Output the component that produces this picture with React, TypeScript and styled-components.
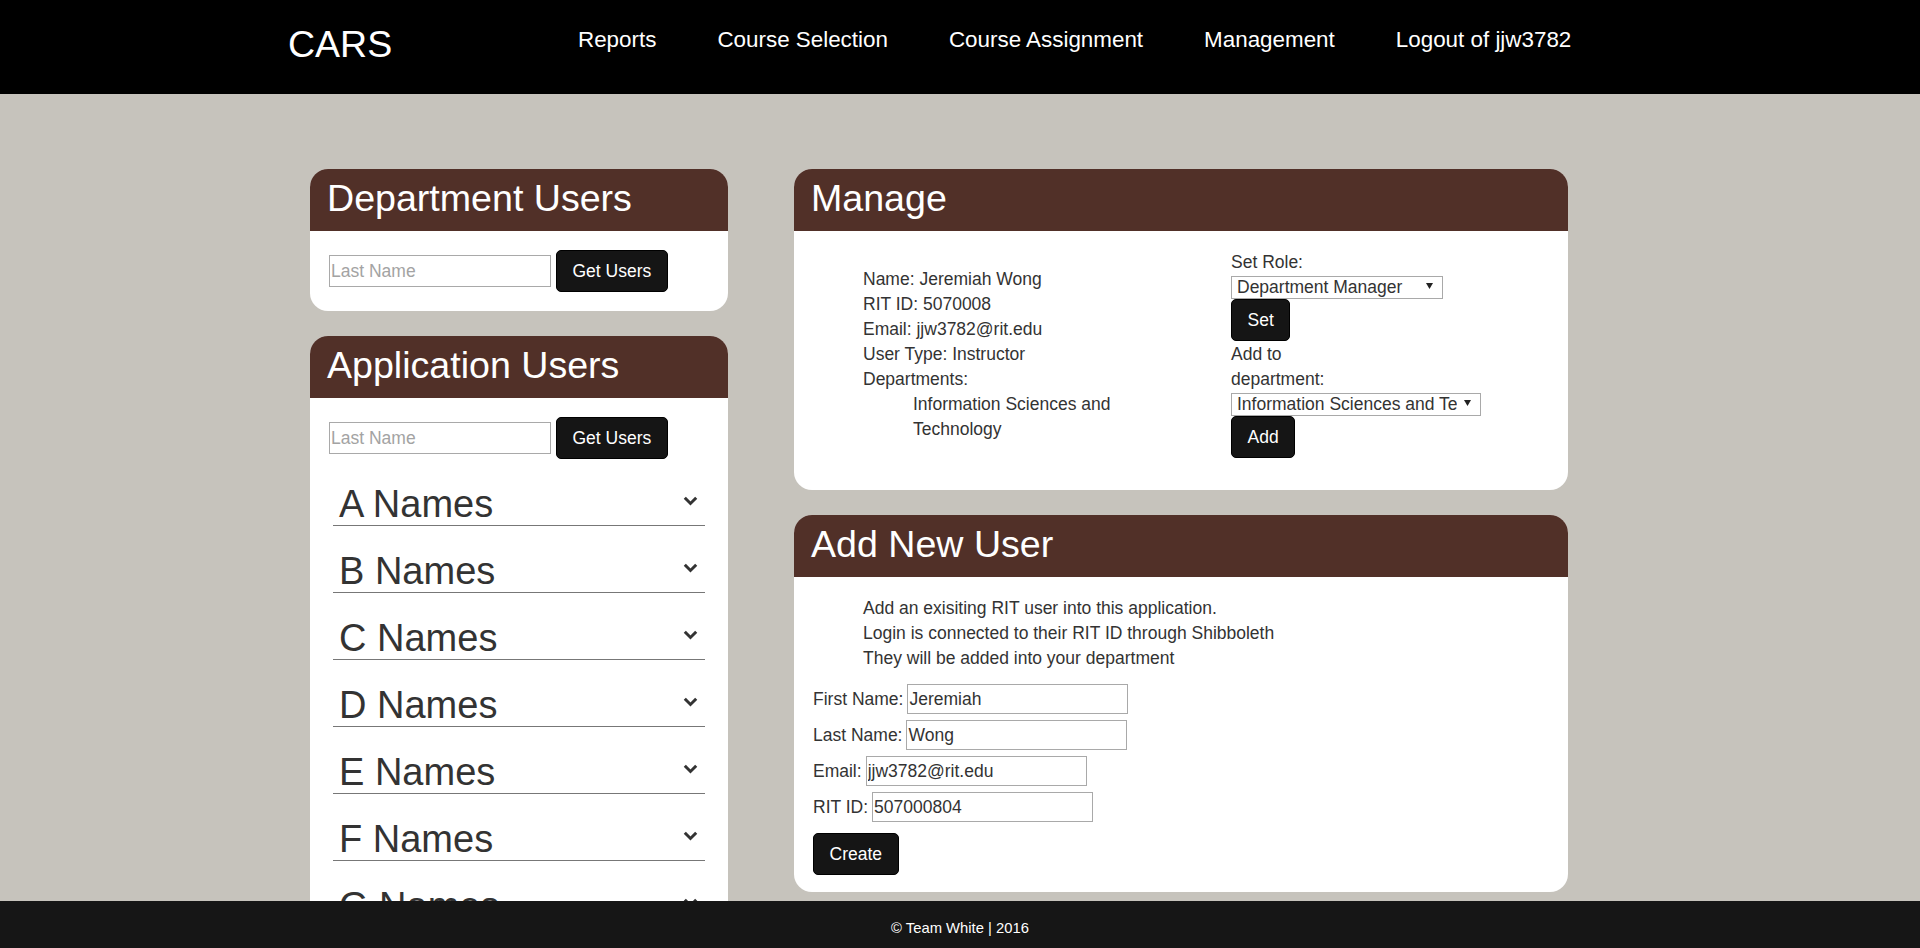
import React from "react";
import styled, { createGlobalStyle } from "styled-components";

const FONT = `"Liberation Sans", Arial, sans-serif`;
const LETTERS = "ABCDEFGHIJKLMNOPQRSTUVWXYZ".split("");
const NAV = ["Reports", "Course Selection", "Course Assignment", "Management", "Logout of jjw3782"];

const GlobalStyle = createGlobalStyle`
  body {
    margin: 0;
    background: #c6c3bc;
    font-family: ${FONT};
    color: #333;
  }
`;

const Chevron = () => (
  <ChevronIcon width="15" height="10" viewBox="0 0 15 10">
    <polyline points="1.8,1.8 7.5,7.5 13.2,1.8" fill="none" stroke="#333" strokeWidth="3" />
  </ChevronIcon>
);

const Caret = () => (
  <CaretIcon width="7" height="6" viewBox="0 0 7 6">
    <polygon points="0,0 7,0 3.5,6" fill="#222" />
  </CaretIcon>
);

const App = (): JSX.Element => (
  <>
    <GlobalStyle />
    <TopBar>
      <Brand>CARS</Brand>
      <Nav>
        {NAV.map((item) => (
          <NavLink key={item} href="#">
            {item}
          </NavLink>
        ))}
      </Nav>
    </TopBar>

    <Main>
      <Column $width={418}>
        <Panel>
          <PanelHeader>Department Users</PanelHeader>
          <PanelBody>
            <SearchRow>
              <TextInput placeholder="Last Name" />
              <Button>Get Users</Button>
            </SearchRow>
          </PanelBody>
        </Panel>

        <Panel>
          <PanelHeader>Application Users</PanelHeader>
          <PanelBody $pad="19px 19px 20px">
            <SearchRow>
              <TextInput placeholder="Last Name" />
              <Button>Get Users</Button>
            </SearchRow>
            <NameList>
              {LETTERS.map((l) => (
                <NameItem key={l}>
                  <NameLabel>{l} Names</NameLabel>
                  <Chevron />
                </NameItem>
              ))}
            </NameList>
          </PanelBody>
        </Panel>
      </Column>

      <Column $width={774}>
        <Panel>
          <PanelHeader>Manage</PanelHeader>
          <ManageBody>
            <InfoCol>
              <div>Name: Jeremiah Wong</div>
              <div>RIT ID: 5070008</div>
              <div>Email: jjw3782@rit.edu</div>
              <div>User Type: Instructor</div>
              <div>Departments:</div>
              <DeptName>Information Sciences and Technology</DeptName>
            </InfoCol>
            <ActionCol>
              <FieldLabel>Set Role:</FieldLabel>
              <SelectWrap $width={212}>
                <Select defaultValue="manager">
                  <option value="instructor">Instructor</option>
                  <option value="manager">Department Manager</option>
                  <option value="admin">Administrator</option>
                </Select>
                <Caret />
              </SelectWrap>
              <Button $gapBelow>Set</Button>
              <FieldLabel>Add to department:</FieldLabel>
              <SelectWrap $width={250}>
                <Select defaultValue="ist">
                  <option value="ist">Information Sciences and Technology</option>
                  <option value="cs">Computer Science</option>
                </Select>
                <Caret />
              </SelectWrap>
              <Button>Add</Button>
            </ActionCol>
          </ManageBody>
        </Panel>

        <Panel>
          <PanelHeader>Add New User</PanelHeader>
          <PanelBody $pad="19px 19px 17px">
            <Intro>
              <div>Add an exisiting RIT user into this application.</div>
              <div>Login is connected to their RIT ID through Shibboleth</div>
              <div>They will be added into your department</div>
            </Intro>
            <FormRow>
              <span>First Name:</span>
              <TextInput $h={30} $w={221} defaultValue="Jeremiah" />
            </FormRow>
            <FormRow>
              <span>Last Name:</span>
              <TextInput $h={30} $w={221} defaultValue="Wong" />
            </FormRow>
            <FormRow>
              <span>Email:</span>
              <TextInput $h={30} $w={221} defaultValue="jjw3782@rit.edu" />
            </FormRow>
            <FormRow>
              <span>RIT ID:</span>
              <TextInput $h={30} $w={221} defaultValue="507000804" />
            </FormRow>
            <Button $gapAbove>Create</Button>
          </PanelBody>
        </Panel>
      </Column>
    </Main>

    <Footer>© Team White | 2016</Footer>
  </>
);

const TopBar = styled.header`
  background: #000;
  height: 94px;
  box-sizing: border-box;
  display: flex;
  align-items: flex-start;
  padding-left: 288px;
`;

const Brand = styled.div`
  width: 290px;
  padding-top: 26px;
  font-size: 37.5px;
  line-height: 1;
  color: #fff;
`;

const Nav = styled.nav`
  display: flex;
  gap: 61px;
  padding-top: 29px;
`;

const NavLink = styled.a`
  color: #fff;
  font-size: 22.4px;
  line-height: 1;
  text-decoration: none;
`;

const Main = styled.main`
  display: flex;
  align-items: flex-start;
  gap: 66px;
  padding: 75px 0 80px 310px;
`;

const Column = styled.div<{ $width: number }>`
  width: ${(p) => p.$width}px;
  flex-shrink: 0;
  display: flex;
  flex-direction: column;
  gap: 25px;
`;

const Panel = styled.section`
  background: #fff;
  border-radius: 18px;
  overflow: hidden;
`;

const PanelHeader = styled.h2`
  margin: 0;
  height: 62px;
  box-sizing: border-box;
  padding: 11px 0 0 17px;
  background: #513028;
  color: #fff;
  font-size: 37.6px;
  font-weight: normal;
  line-height: 1;
`;

const PanelBody = styled.div<{ $pad?: string }>`
  padding: ${(p) => p.$pad ?? "19px"};
  font-size: 17.5px;
`;

const SearchRow = styled.div`
  display: flex;
  align-items: center;
  gap: 5px;
`;

const TextInput = styled.input<{ $w?: number; $h?: number }>`
  width: ${(p) => p.$w ?? 222}px;
  height: ${(p) => p.$h ?? 32}px;
  box-sizing: border-box;
  margin: 0;
  padding: 0 1px;
  border: 1px solid #a9a9a9;
  border-radius: 0;
  font: 17.5px ${FONT};
  color: #333;
  outline: none;

  &::placeholder {
    color: #a3a3a3;
  }
`;

const Button = styled.button<{ $gapAbove?: boolean; $gapBelow?: boolean }>`
  height: 42px;
  margin: ${(p) => (p.$gapAbove ? "5px" : "0")} 0 ${(p) => (p.$gapBelow ? "1px" : "0")};
  padding: 0 15.5px;
  background: #151515;
  color: #fff;
  border: 1px solid #000;
  border-radius: 5px;
  font: 17.5px ${FONT};
  cursor: pointer;
`;

const NameList = styled.ul`
  list-style: none;
  margin: 0 4px;
  padding: 0;
`;

const NameItem = styled.li`
  height: 66px;
  display: flex;
  align-items: flex-end;
  justify-content: space-between;
  padding: 0 7px 0 6px;
  border-bottom: 1px solid #777;
  color: #333;
`;

const NameLabel = styled.span`
  font-size: 38px;
  line-height: 1;
  margin-bottom: 2px;
`;

const ChevronIcon = styled.svg`
  margin-bottom: 19px;
`;

const ManageBody = styled.div`
  display: flex;
  align-items: center;
  padding: 19px 19px 32px 69px;
  font-size: 17.5px;
  line-height: 25px;
`;

const InfoCol = styled.div`
  width: 368px;
  flex-shrink: 0;
`;

const DeptName = styled.div`
  margin-left: 50px;
  width: 215px;
`;

const ActionCol = styled.div`
  width: 110px;
  display: flex;
  flex-direction: column;
  align-items: flex-start;
`;

const FieldLabel = styled.label`
  display: block;
`;

const SelectWrap = styled.div<{ $width: number }>`
  position: relative;
  width: ${(p) => p.$width}px;
  height: 23px;
  margin-bottom: 1px;
  flex-shrink: 0;
`;

const Select = styled.select`
  appearance: none;
  width: 100%;
  height: 100%;
  box-sizing: border-box;
  margin: 0;
  padding: 0 23px 0 5px;
  border: 1px solid #a9a9a9;
  border-radius: 0;
  background: #fff;
  font: 17.5px ${FONT};
  color: #333;
  outline: none;
`;

const CaretIcon = styled.svg`
  position: absolute;
  right: 10px;
  top: 8px;
  pointer-events: none;
`;

const Intro = styled.div`
  margin: 0 0 13px 50px;
  line-height: 25px;
`;

const FormRow = styled.div`
  display: flex;
  align-items: center;
  gap: 4px;
  height: 30px;
  margin-bottom: 6px;
`;

const Footer = styled.footer`
  position: fixed;
  left: 0;
  right: 0;
  bottom: 0;
  height: 47px;
  box-sizing: border-box;
  padding-top: 7px;
  background: #161616;
  color: #fff;
  display: flex;
  align-items: center;
  justify-content: center;
  font-size: 14.8px;
  z-index: 10;
`;

export default App;
